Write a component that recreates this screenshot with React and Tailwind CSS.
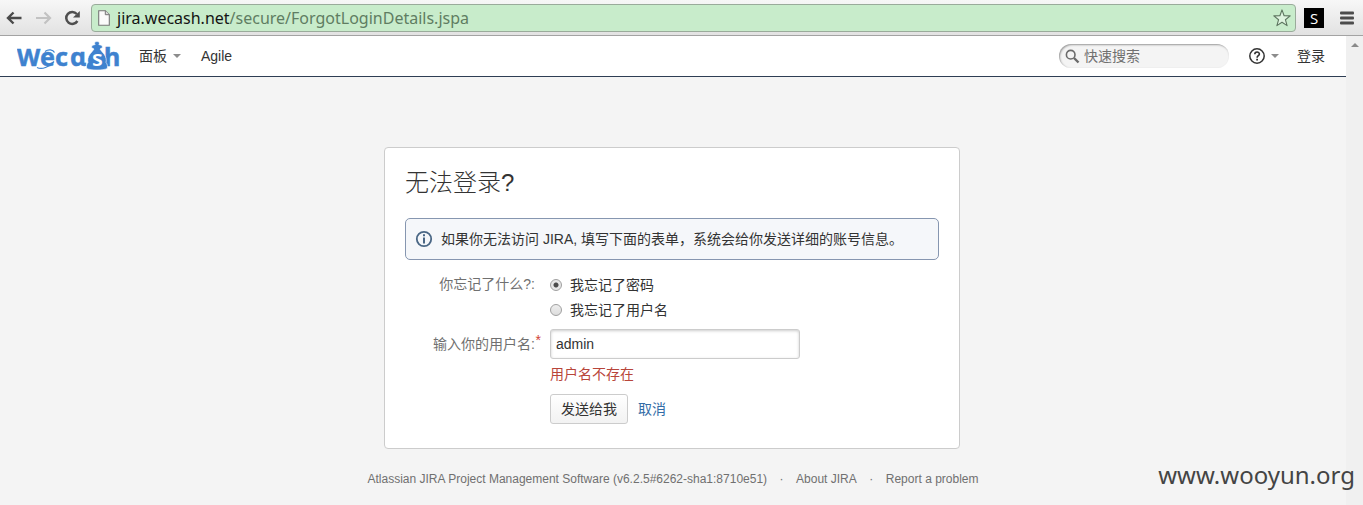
import React, { useState } from "react";

function BrowserBar() {
  return (
    <div className="flex h-9 shrink-0 items-center border-b border-[#a3a3a3] bg-linear-to-b from-[#f7f7f7] to-[#e2e2e2] pl-1.5 pr-2">
      <button type="button" aria-label="Back" className="flex w-7 shrink-0">
        <svg width="17" height="16" viewBox="0 0 17 16" fill="none" stroke="#4a4a4a" strokeWidth="2.4">
          <path d="M7.500 2.500 2 8l5.500 5.500M2.500 8H15.500" />
        </svg>
      </button>
      <button type="button" aria-label="Forward" className="flex w-7 shrink-0 pl-0.5">
        <svg width="17" height="16" viewBox="0 0 17 16" fill="none" stroke="#c2c2c2" strokeWidth="2.2">
          <path d="M8.500 2.500l5.500 5.500-5.500 5.500M14 8H0" />
        </svg>
      </button>
      <button type="button" aria-label="Reload" className="mr-px flex w-7 shrink-0 pl-0.5">
        <svg width="17" height="16" viewBox="0 0 17 16">
          <path d="M13.4 11A6 6 0 1 1 12.800 4" fill="none" stroke="#4f4f4f" strokeWidth="2.500" />
          <path d="M15.800 1v6.600H9z" fill="#4f4f4f" />
        </svg>
      </button>
      <div className="flex h-7 min-w-0 grow items-center rounded-sm border border-[#9aab9b] bg-[#c8eccb] pl-1.5 pr-1">
        <svg width="12" height="16" viewBox="0 0 12 16" className="shrink-0">
          <path d="M.7.7h6.600l4 4v10.600H.7z" fill="#fbfbfb" stroke="#777" strokeWidth="1.100" />
          <path d="M7.300.7v4h4" fill="#ddd" stroke="#777" strokeWidth="1" />
        </svg>
        <span className="ml-[7px] grow whitespace-nowrap font-['Noto_Sans',sans-serif] text-[16px] leading-6 text-[#5f7d62]">
          <span className="text-[#141414]">jira.wecash.net</span>/secure/ForgotLoginDetails.jspa
        </span>
        <button type="button" aria-label="Bookmark" className="shrink-0">
          <svg width="18" height="18" viewBox="0 0 18 18" fill="#def3df" stroke="#5d755f" strokeWidth="1.100" strokeLinejoin="round">
            <path d="M9 .9l2.100 5.800 6.100.2-4.800 3.800 1.700 5.900L9 13.200l-5.100 3.400 1.700-5.900L.8 6.900l6.100-.2z" />
          </svg>
        </button>
      </div>
      <button type="button" className="ml-2 flex h-5 w-5 shrink-0 items-center justify-center bg-black font-['Open_Sans',sans-serif] text-[15px] leading-5 text-white">
        S
      </button>
      <button type="button" aria-label="Menu" className="ml-4 mr-px shrink-0">
        <svg width="14" height="14" viewBox="0 0 14 14" fill="#4c4c4c">
          <rect y="0.500" width="14" height="3" rx="1" />
          <rect y="5.500" width="14" height="3" rx="1" />
          <rect y="10.500" width="14" height="3" rx="1" />
        </svg>
      </button>
    </div>
  );
}

function Logo() {
  return (
    <svg width="104" height="36" viewBox="0 -2 104 36" role="img" aria-label="Wecash">
      <g fill="#3e82cf" stroke="#3e82cf" strokeWidth="0.500" fontFamily="'Noto Sans', sans-serif" fontWeight="700" fontSize="25">
        <text x="0" y="26" fontSize="24">W</text>
        <text x="23" y="26">e</text>
        <text x="38" y="26">c</text>
        <text x="53" y="26">ɑ</text>
        <text x="87" y="26">h</text>
      </g>
      <path d="M20 27.500c5 2.500 12-.5 17-6" fill="none" stroke="#3e82cf" strokeWidth="1.300" />
      <path d="M28 11.500c3.500-2.500 8-2 9.500 1" fill="none" stroke="#3e82cf" strokeWidth="1.200" />
      <path
        d="M78.200 4.500c-1.300-1.300-.3-3 1.800-3s3.100 1.700 1.800 3l3.200 1 .5 2-2.500 1.500c1 2 2.500 3 4 5 2.200 3 2.600 6 2 8.500 1.500 1.500 1.700 4 1.300 6-4 2-16.600 2-20.600 0-.4-2-.2-4.500 1.300-6-.6-2.500-.2-5.500 2-8.500 1.500-2 3-3 4-5L74.500 7.500l.5-2z"
        fill="#3e82cf"
        stroke="#fff"
        strokeWidth="0.600"
      />
      <text x="75" y="26" fill="#fff" fontFamily="'Noto Sans', sans-serif" fontWeight="600" fontSize="22">s</text>
    </svg>
  );
}

function Caret() {
  return (
    <svg width="8" height="4" viewBox="0 0 8 4" fill="#8c8c8c">
      <path d="M0 0h8L4 4z" />
    </svg>
  );
}

function SiteHeader() {
  return (
    <header className="flex h-[41px] items-center border-b border-[#2e3d54] bg-white pl-[17px] pr-[21px] text-[#333]">
      <a href="#home" className="shrink-0">
        <Logo />
      </a>
      <nav className="flex grow items-center gap-5 pl-[18px]">
        <button type="button" className="flex items-center gap-1.5">
          面板 <Caret />
        </button>
        <a href="#agile">Agile</a>
      </nav>
      <label className="flex h-6 w-[170px] items-center gap-1 rounded-full bg-[#f4f4f4] pl-1.5 shadow-[inset_1px_1px_2px_#999]">
        <svg width="15" height="15" viewBox="0 0 15 15" fill="none" stroke="#6b6b6b">
          <circle cx="5.700" cy="5.700" r="4.300" strokeWidth="1.600" />
          <path d="M9 9l4.500 4.500" strokeWidth="2.400" />
        </svg>
        <input aria-label="快速搜索" placeholder="快速搜索" className="w-32 bg-transparent outline-none placeholder:text-[#707070]" />
      </label>
      <button type="button" aria-label="帮助" className="ml-5 flex items-center gap-1.5">
        <svg width="16" height="16" viewBox="0 0 16 16" fill="none" stroke="#333">
          <circle cx="8" cy="8" r="7.200" strokeWidth="1.500" />
          <path d="M5.800 6.300C5.800 3.300 10.400 3.400 10.400 6c0 1.700-2.300 1.800-2.300 3.700" strokeWidth="1.600" />
          <path d="M8.100 10.800v1.800" strokeWidth="1.800" />
        </svg>
        <Caret />
      </button>
      <a href="#login" className="ml-[18px]">登录</a>
    </header>
  );
}

function Choice({ value, current, onPick, children }) {
  return (
    <label className="flex h-[25px] items-center gap-2">
      <input
        type="radio"
        name="forgotten"
        value={value}
        checked={current === value}
        onChange={() => onPick(value)}
        className="size-3 appearance-none rounded-full border border-[#a0a0a0] bg-linear-to-b from-[#eee] to-[#ddd] checked:bg-[radial-gradient(circle,#4a4a4a_2px,#e6e6e6_3px)]"
      />
      {children}
    </label>
  );
}

function ForgotForm() {
  const [kind, setKind] = useState("password");
  return (
    <section className="mx-auto mt-[70px] w-full max-w-[576px] rounded border border-[#ccc] bg-white px-5 pb-6 pt-5 text-[#333]">
      <h1 className="text-2xl font-light leading-[30px]">无法登录?</h1>
      <div className="mt-5 flex h-[42px] items-center gap-2 rounded-[5px] border border-[#8696b0] bg-[#f5f7fa] px-[9px]">
        <svg width="18" height="18" viewBox="0 0 18 18" fill="none" stroke="#4a6785">
          <circle cx="9" cy="9" r="7.200" strokeWidth="1.800" />
          <path d="M9 4.300v2M9 7.500v6" strokeWidth="2" />
        </svg>
        <p>如果你无法访问 JIRA, 填写下面的表单，系统会给你发送详细的账号信息。</p>
      </div>
      <form className="mt-3 grid grid-cols-[130px_1fr] gap-x-[15px]" onSubmit={(e) => e.preventDefault()}>
        <div id="kind-label" className="text-right leading-[25px] text-[#707070]">你忘记了什么?:</div>
        <div role="radiogroup" aria-labelledby="kind-label">
          <Choice value="password" current={kind} onPick={setKind}>我忘记了密码</Choice>
          <Choice value="username" current={kind} onPick={setKind}>我忘记了用户名</Choice>
        </div>
        <label htmlFor="username" className="relative mt-[7px] text-right leading-[30px] text-[#707070]">
          输入你的用户名:
          <span className="absolute -right-1.5 -top-1 text-[#d04437]">*</span>
        </label>
        <div className="mt-[7px]">
          <input
            id="username"
            defaultValue="admin"
            className="block h-[30px] w-[250px] rounded-[3px] border border-[#ccc] bg-white px-[5px] shadow-[inset_0_1px_3px_#ccc] outline-none"
          />
          <p className="mt-[5px] leading-5 text-[#b8453a]">用户名不存在</p>
          <div className="mt-2.5 flex items-center gap-2.5">
            <button type="submit" className="h-[30px] rounded-[3px] border border-[#ccc] bg-linear-to-b from-white to-[#f2f2f2] px-2.5">
              发送给我
            </button>
            <a href="#cancel" className="text-[#326ca6]">取消</a>
          </div>
        </div>
      </form>
    </section>
  );
}

export default function App() {
  return (
    <div className="relative flex min-h-screen flex-col bg-[#f4f4f4] font-['Liberation_Sans','Noto_Sans_CJK_SC',sans-serif] text-sm">
      <BrowserBar />
      <div className="flex grow">
        <div className="min-w-0 grow">
          <SiteHeader />
          <main className="pr-0.5">
            <ForgotForm />
          </main>
          <footer className="mt-[22px] flex justify-center text-xs text-[#707070]">
            <span>Atlassian JIRA Project Management Software (v6.2.5#6262-sha1:8710e51)</span>
            <span className="w-[29px] text-center">·</span>
            <a href="#about">About JIRA</a>
            <span className="w-[29px] text-center">·</span>
            <a href="#report">Report a problem</a>
          </footer>
        </div>
        <div className="flex w-[17px] shrink-0 justify-center bg-[#f0f0f0] pt-[7px]">
          <svg width="8" height="4" viewBox="0 0 8 4" fill="#8a8a8a">
            <path d="M0 4h8L4 0z" />
          </svg>
        </div>
      </div>
      <div className="absolute bottom-3.5 right-2 font-['Noto_Sans',sans-serif] text-2xl text-[#444]">www.wooyun.org</div>
    </div>
  );
}
